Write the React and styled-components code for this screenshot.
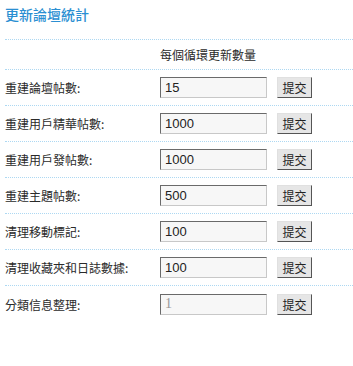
import styled, { createGlobalStyle } from "styled-components"

const Global = createGlobalStyle`
  body {
    margin: 0;
    background: #fff;
    font-family: "Liberation Sans", "Noto Sans CJK TC", sans-serif;
  }
`

const rows = [
  { label: "重建論壇帖數:", value: "15" },
  { label: "重建用戶精華帖數:", value: "1000" },
  { label: "重建用戶發帖數:", value: "1000" },
  { label: "重建主題帖數:", value: "500" },
  { label: "清理移動標記:", value: "100" },
  { label: "清理收藏夾和日誌數據:", value: "100" },
  { label: "分類信息整理:", value: "1", muted: true },
]

function App() {
  return (
    <Page>
      <Global />
      <Title>更新論壇統計</Title>
      <HeaderRow>
        <Label />
        <HeaderText>每個循環更新數量</HeaderText>
      </HeaderRow>
      {rows.map((r, i) => (
        <Row key={r.label} $last={i === rows.length - 1}>
          <Label>{r.label}</Label>
          <Input defaultValue={r.value} $muted={r.muted} />
          <Button>提交</Button>
        </Row>
      ))}
    </Page>
  )
}

export default App

const Page = styled.div`
  margin-left: 5px;
  width: 348px;
`

const Title = styled.h2`
  margin: 0;
  height: 40px;
  box-sizing: border-box;
  padding-top: 4px;
  font-family: "Noto Sans CJK TC", sans-serif;
  font-size: 14px;
  font-weight: 500;
  color: #2b8fd2;
  border-bottom: 1px dotted #add8f2;
`

const HeaderRow = styled.div`
  display: flex;
  align-items: center;
  height: 30px;
  box-sizing: border-box;
  border-bottom: 1px dotted #add8f2;
`

const HeaderText = styled.span`
  font-family: "Noto Sans CJK TC", sans-serif;
  font-size: 12px;
  color: #2a2a2a;
`

const Row = styled.div`
  display: flex;
  align-items: center;
  height: 36px;
  box-sizing: border-box;
  border-bottom: ${(p) => (p.$last ? "none" : "1px dotted #add8f2")};
`

const Label = styled.span`
  width: 155px;
  flex-shrink: 0;
  font-family: "Noto Sans CJK TC", sans-serif;
  font-size: 12px;
  color: #2a2a2a;
`

const Input = styled.input`
  width: 107px;
  height: 21px;
  box-sizing: border-box;
  padding: 0 0 0 4px;
  border-width: 1px;
  border-style: solid;
  border-color: #6a6a6a #c8c8c8 #c8c8c8 #6a6a6a;
  background: #f7f7f7;
  font-family: ${(p) => (p.$muted ? '"Liberation Serif", serif' : '"Liberation Sans", sans-serif')};
  font-size: ${(p) => (p.$muted ? "14px" : "13px")};
  color: ${(p) => (p.$muted ? "#999" : "#222")};
  outline: none;
`

const Button = styled.button`
  margin-left: 10px;
  width: 35px;
  height: 21px;
  padding: 0;
  box-sizing: border-box;
  border-width: 1px;
  border-style: solid;
  border-color: #e0e0e0 #555 #555 #e0e0e0;
  background: #e6e6e6;
  font-family: "Noto Sans CJK TC", sans-serif;
  font-size: 12px;
  color: #222;
`
